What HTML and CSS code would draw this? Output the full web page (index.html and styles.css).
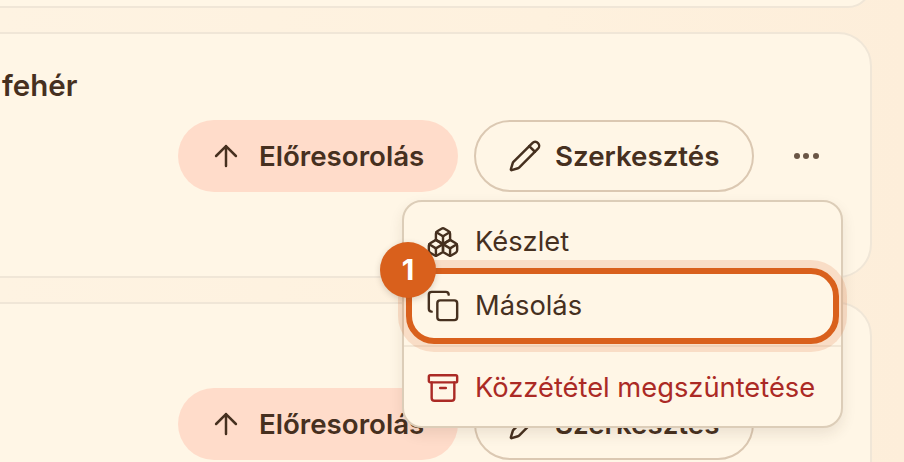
FILE: index.html
```html
<!DOCTYPE html>
<html lang="hu">
<head>
<meta charset="utf-8">
<title>Termékek</title>
<link rel="stylesheet" href="styles.css">
</head>
<body>
<main class="page">
  <section class="card card-prev"></section>
  <section class="card card-main">
    <h2 class="title">fehér</h2>
    <div class="actions">
      <button class="btn btn-promote"><svg class="icon" viewBox="0 0 24 24"><path d="M12 19V5M5 12l7-7 7 7"/></svg>Előresorolás</button>
      <button class="btn btn-edit"><svg class="icon" viewBox="0 0 24 24"><path d="M21.174 6.812a1 1 0 0 0-3.986-3.987L3.842 16.174a2 2 0 0 0-.5.83l-1.321 4.352a.5.5 0 0 0 .623.622l4.353-1.32a2 2 0 0 0 .83-.497z"/><path d="m15 5 4 4"/></svg>Szerkesztés</button>
      <button class="more" aria-label="Több"><span class="dot"></span><span class="dot"></span><span class="dot"></span></button>
    </div>
  </section>
  <section class="card card-next">
    <div class="actions">
      <button class="btn btn-promote"><svg class="icon" viewBox="0 0 24 24"><path d="M12 19V5M5 12l7-7 7 7"/></svg>Előresorolás</button>
      <button class="btn btn-edit"><svg class="icon" viewBox="0 0 24 24"><path d="M21.174 6.812a1 1 0 0 0-3.986-3.987L3.842 16.174a2 2 0 0 0-.5.83l-1.321 4.352a.5.5 0 0 0 .623.622l4.353-1.32a2 2 0 0 0 .83-.497z"/><path d="m15 5 4 4"/></svg>Szerkesztés</button>
    </div>
  </section>
  <div class="menu">
    <div class="item"><svg class="item-icon" viewBox="0 0 24 24"><path d="M2.97 12.92A2 2 0 0 0 2 14.63v3.24a2 2 0 0 0 .97 1.71l3 1.8a2 2 0 0 0 2.06 0L12 19v-5.5l-5-3-4.03 2.42Z"/><path d="m7 16.5-4.74-2.85"/><path d="m7 16.5 5-3"/><path d="M7 16.5v5.17"/><path d="M12 13.5V19l3.97 2.38a2 2 0 0 0 2.06 0l3-1.8a2 2 0 0 0 .97-1.71v-3.24a2 2 0 0 0-.97-1.71L17 10.5l-5 3Z"/><path d="m17 16.5-5-3"/><path d="m17 16.5 4.74-2.85"/><path d="M17 16.5v5.17"/><path d="M7.97 4.42A2 2 0 0 0 7 6.13v4.37l5 3 5-3V6.13a2 2 0 0 0-.97-1.71l-3-1.8a2 2 0 0 0-2.06 0l-3 1.8Z"/><path d="M12 8 7.26 5.15"/><path d="m12 8 4.74-2.85"/><path d="M12 13.5V8"/></svg>Készlet</div>
    <div class="item item-focus"><svg class="item-icon" viewBox="0 0 24 24"><rect x="8" y="8" width="14" height="14" rx="2"/><path d="M4 16c-1.1 0-2-.9-2-2V4c0-1.1.9-2 2-2h10c1.1 0 2 .9 2 2"/></svg>Másolás<span class="ring"></span><span class="badge">1</span></div>
    <div class="divider"></div>
    <div class="item item-danger"><svg class="item-icon" viewBox="0 0 24 24"><rect x="2" y="3" width="20" height="5" rx="1"/><path d="M4 8v11a2 2 0 0 0 2 2h12a2 2 0 0 0 2-2V8"/><path d="M10 12h4"/></svg>Közzététel megszüntetése</div>
  </div>
</main>
</body>
</html>
```

FILE: styles.css
```css
* { box-sizing: border-box; }

html, body {
  margin: 0;
  height: 100%;
  overflow: hidden;
}

body {
  font-family: Inter, "Liberation Sans", sans-serif;
  color: #46301f;
  background: #fdeedb;
}

.page {
  position: relative;
  width: 904px;
  height: 462px;
  overflow: hidden;
  display: flex;
  flex-direction: column;
  gap: 24px;
  padding-right: 32px;
  background: linear-gradient(90deg, #fef3e2 0%, #fef1de 60%, #fdeeda 100%);
}

.card {
  flex: none;
  width: 904px;
  margin-left: -32px;
  margin-right: -32px;
  align-self: flex-start;
  background: #fff6e6;
  border: 2px solid #f0e6d7;
  border-radius: 34px;
  padding-right: 28px;
}

.card-prev {
  height: 48px;
  margin-top: -40px;
}

.card-main {
  height: 246px;
  padding: 34px 28px 0 32px;
  width: 904px;
}

.card-next {
  height: 220px;
  padding-top: 84px;
}

.title {
  margin: 0;
  height: 52px;
  font-size: 29.5px;
  line-height: 35px;
  font-weight: 600;
  color: #46301f;
}

.actions {
  display: flex;
  justify-content: flex-end;
  gap: 16px;
  height: 72px;
}

.card-next .actions {
  padding-right: 88px;
}

.btn {
  display: flex;
  align-items: center;
  gap: 16px;
  height: 72px;
  width: 280px;
  padding: 0 0 0 31px;
  border: 0;
  border-radius: 36px;
  font: 600 27.7px/36px Inter, "Liberation Sans", sans-serif;
  color: #46301f;
  background: transparent;
  white-space: nowrap;
}

.btn-promote {
  background: #ffdcca;
}

.btn-edit {
  gap: 13px;
  border: 2px solid #dbc8b2;
  padding-left: 32px;
}

.icon {
  flex: none;
  width: 34px;
  height: 34px;
  fill: none;
  stroke: currentColor;
  stroke-width: 1.75;
  stroke-linecap: round;
  stroke-linejoin: round;
}

.more {
  display: flex;
  align-items: center;
  justify-content: center;
  gap: 3.5px;
  width: 72px;
  height: 72px;
  padding: 0;
  border: 0;
  background: transparent;
}

.dot {
  width: 6px;
  height: 6px;
  border-radius: 50%;
  background: #6a5545;
}

.menu {
  position: absolute;
  left: 402px;
  top: 200px;
  width: 441px;
  height: 228px;
  padding: 8px;
  background: #fff6e6;
  border: 2px solid #dccdb8;
  border-radius: 20px;
  box-shadow: 0 6px 14px rgba(70, 48, 31, 0.1);
}

.item {
  position: relative;
  display: flex;
  align-items: center;
  gap: 15px;
  height: 64px;
  padding-left: 14px;
  font-size: 27.3px;
  line-height: 36px;
  color: #46301f;
  white-space: nowrap;
}

.item-icon {
  flex: none;
  width: 34px;
  height: 34px;
  fill: none;
  stroke: currentColor;
  stroke-width: 1.7;
  stroke-linecap: round;
  stroke-linejoin: round;
}

.item-danger {
  color: #ab2a25;
}

.divider {
  height: 2px;
  margin: 7px -8px 9px;
  background: #f2e7d6;
}

.ring {
  position: absolute;
  left: -6px;
  right: -6px;
  top: -6px;
  height: 76px;
  border: 6px solid #d9601c;
  border-radius: 28px;
  box-shadow: 0 0 0 8px rgba(217, 96, 28, 0.16);
  pointer-events: none;
}

.badge {
  position: absolute;
  left: -32px;
  top: -32px;
  width: 56px;
  height: 56px;
  display: flex;
  align-items: center;
  justify-content: center;
  border-radius: 50%;
  background: #d9601c;
  color: #fff;
  font-size: 29px;
  font-weight: 700;
  box-shadow: 0 2px 6px rgba(70, 48, 31, 0.2);
}
```
